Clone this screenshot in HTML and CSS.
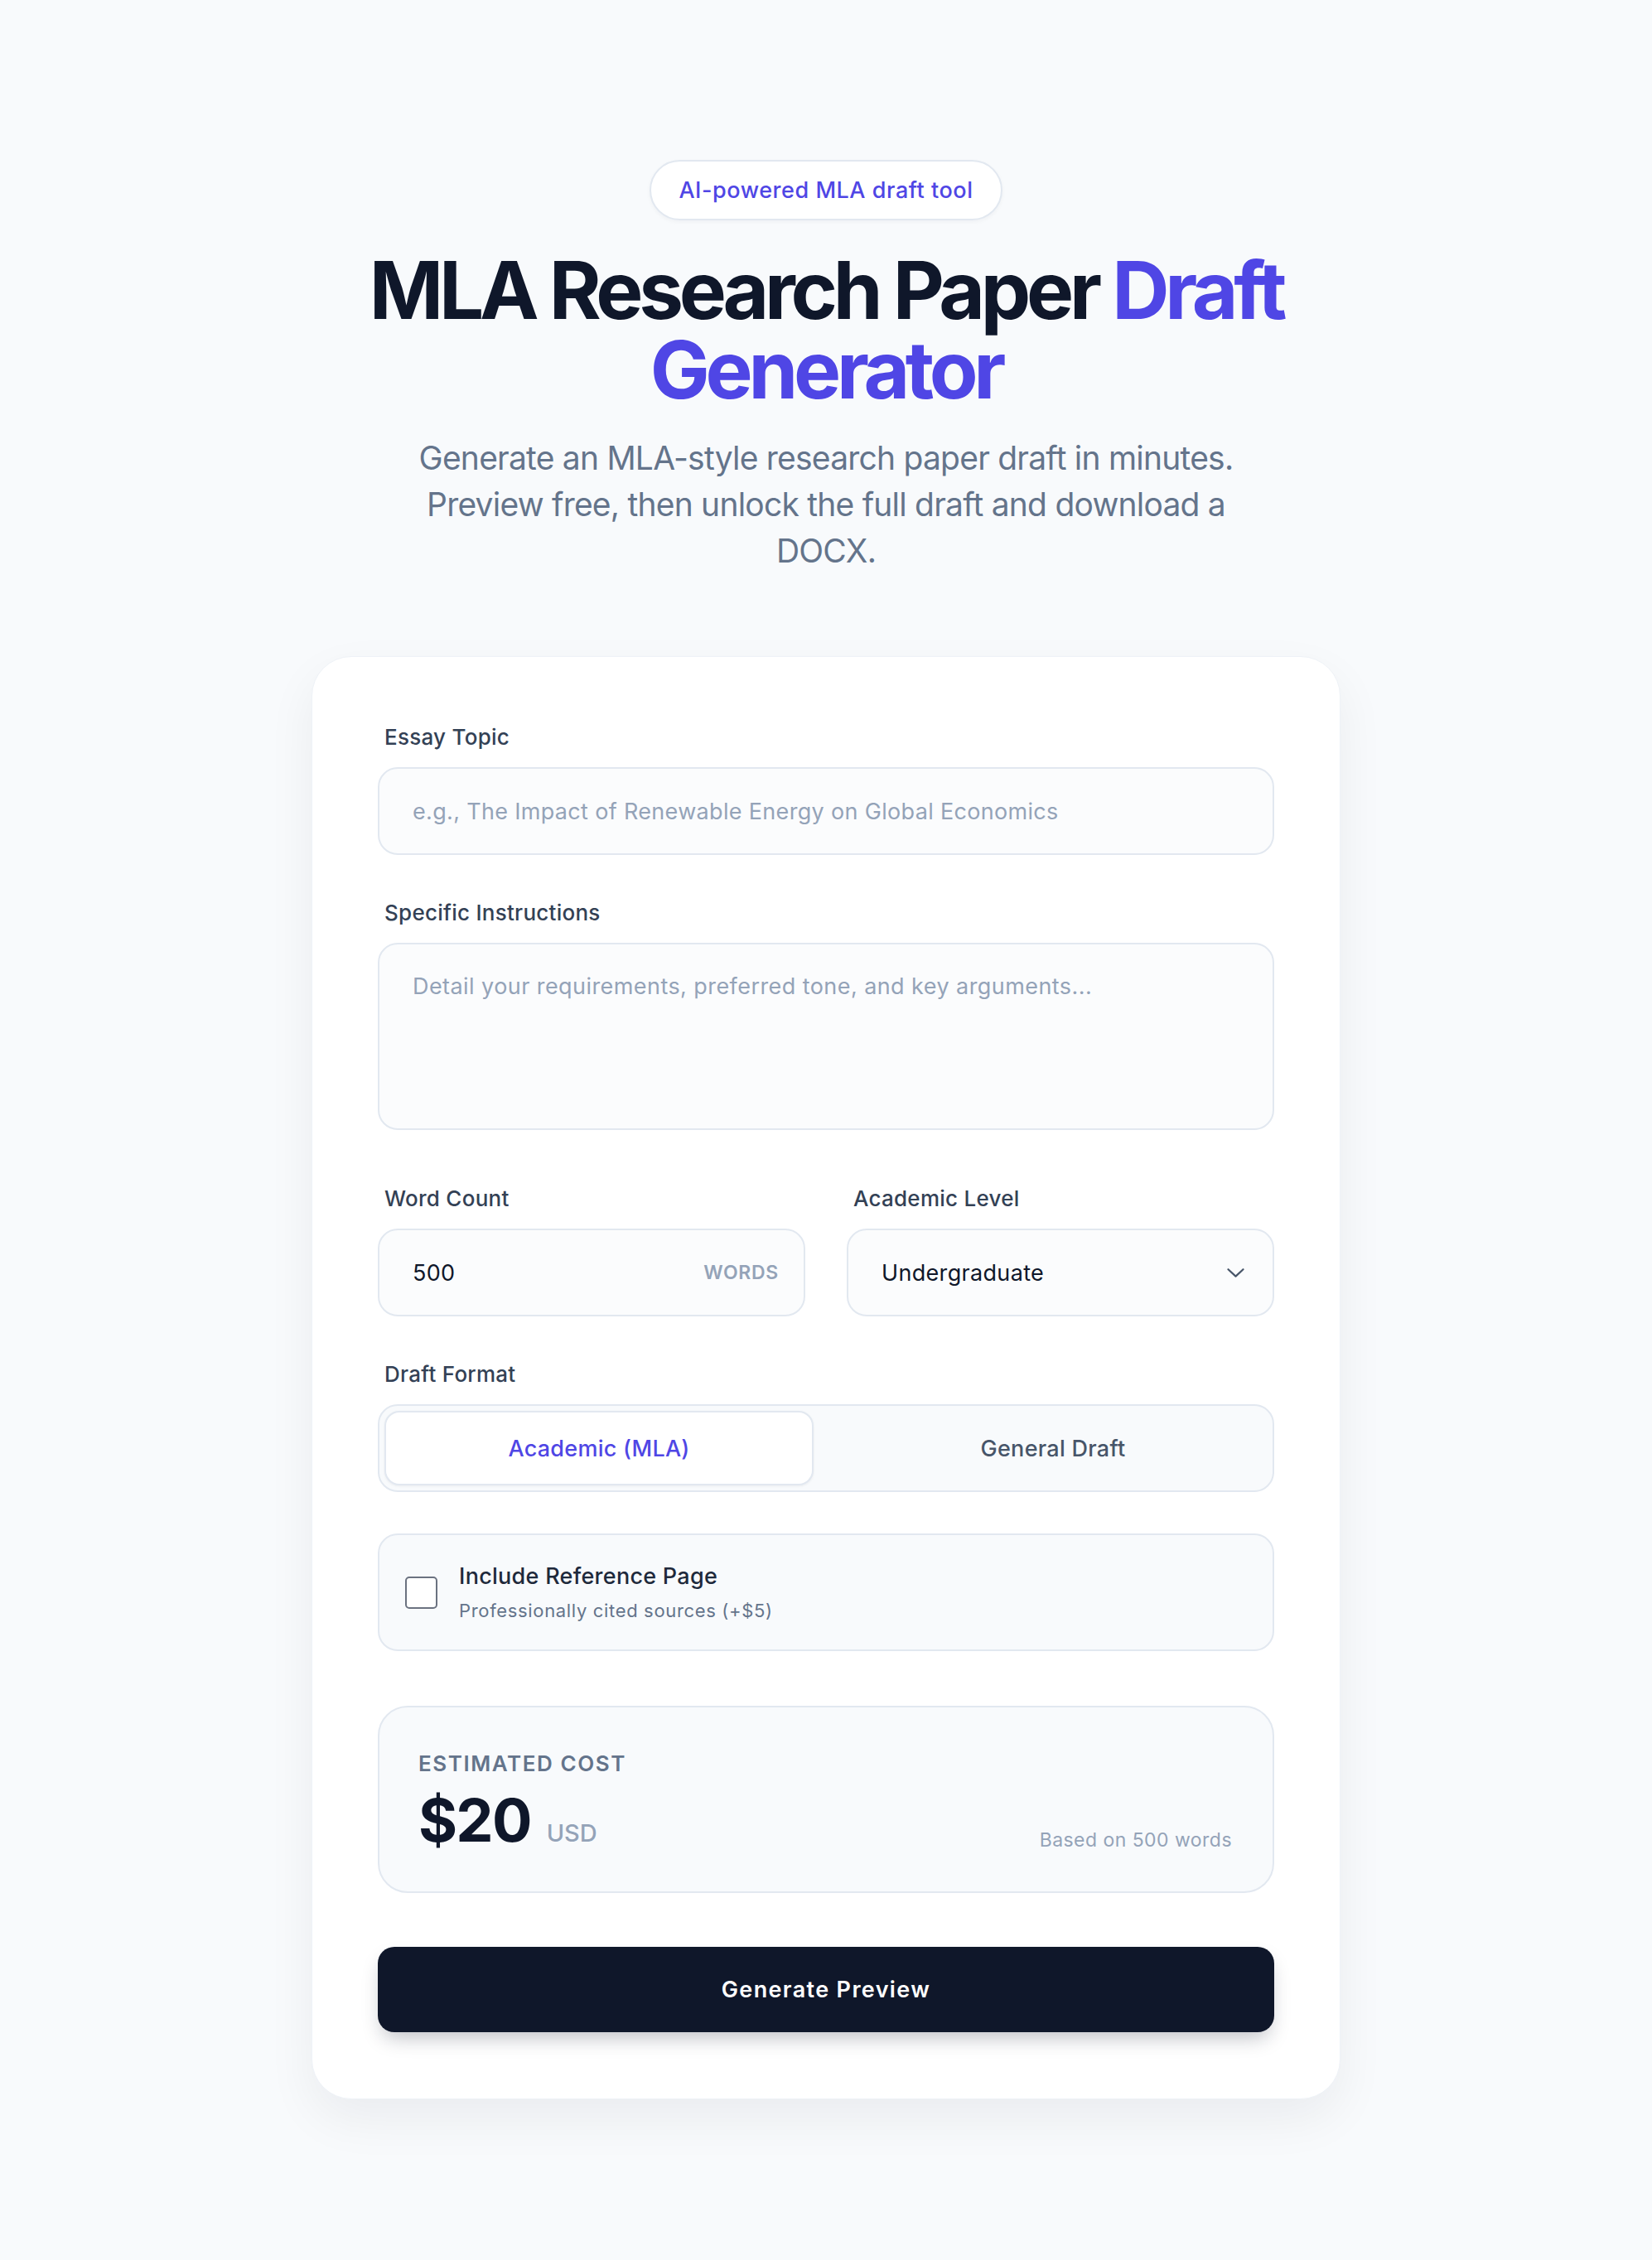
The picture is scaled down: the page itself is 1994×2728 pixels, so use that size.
FILE: index.html
```html
<!DOCTYPE html>
<html lang="en">
<head>
<meta charset="utf-8">
<title>MLA Research Paper Draft Generator</title>
<link rel="stylesheet" href="styles.css">
</head>
<body>
<main class="page">
  <div class="badge">AI-powered MLA draft tool</div>
  <h1 class="title">MLA Research Paper <span class="accent">Draft Generator</span></h1>
  <p class="lead">Generate an MLA-style research paper draft in minutes. Preview free, then unlock the full draft and download a DOCX.</p>

  <form class="card">
    <div class="field">
      <label class="label" for="topic">Essay Topic</label>
      <input class="control" id="topic" type="text" placeholder="e.g., The Impact of Renewable Energy on Global Economics">
    </div>

    <div class="field gap-52">
      <label class="label" for="instructions">Specific Instructions</label>
      <textarea class="control area" id="instructions" placeholder="Detail your requirements, preferred tone, and key arguments..."></textarea>
    </div>

    <div class="row gap-65">
      <div class="field">
        <label class="label" for="words">Word Count</label>
        <div class="control box">
          <input class="bare" id="words" type="text" value="500">
          <span class="suffix">WORDS</span>
        </div>
      </div>
      <div class="field">
        <label class="label" for="level">Academic Level</label>
        <div class="control box select-box">
          <select class="bare" id="level">
            <option>Undergraduate</option>
            <option>High School</option>
            <option>Graduate</option>
          </select>
          <svg class="chevron" width="21" height="11" viewBox="0 0 21 11" aria-hidden="true">
            <path d="M1.5 1.2 L10.5 9.6 L19.5 1.2" fill="none" stroke="#475569" stroke-width="2.2" stroke-linecap="round" stroke-linejoin="round"/>
          </svg>
        </div>
      </div>
    </div>

    <div class="field gap-52">
      <span class="label">Draft Format</span>
      <div class="segmented">
        <button type="button" class="seg active">Academic (MLA)</button>
        <button type="button" class="seg">General Draft</button>
      </div>
    </div>

    <label class="option gap-50">
      <input type="checkbox" class="check">
      <span class="opt-text">
        <span class="opt-title">Include Reference Page</span>
        <span class="opt-sub">Professionally cited sources (+$5)</span>
      </span>
    </label>

    <div class="cost gap-66">
      <div class="cost-label">Estimated Cost</div>
      <div class="cost-row">
        <div class="price">
          <span class="amount">$20</span>
          <span class="currency">USD</span>
        </div>
        <span class="basis">Based on 500 words</span>
      </div>
    </div>

    <button type="button" class="submit gap-65">Generate Preview</button>
  </form>
</main>
</body>
</html>
```

FILE: styles.css
```css
* {
  box-sizing: border-box;
}

body {
  margin: 0;
  background: #f8fafc;
  font-family: Inter, "Noto Sans", "Liberation Sans", sans-serif;
  color: #0f172a;
}

.page {
  display: flex;
  flex-direction: column;
  align-items: center;
  padding: 193px 0 194px;
}

.badge {
  height: 73px;
  padding: 0 33px;
  display: inline-flex;
  align-items: center;
  border: 2px solid #e2e8f0;
  border-radius: 999px;
  background: #ffffff;
  color: #4f46e5;
  font-size: 27px;
  font-weight: 500;
  letter-spacing: 0.02em;
  box-shadow: 0 2px 5px rgba(15, 23, 42, 0.04);
}

.title {
  margin: 36px 0 0;
  max-width: 1242px;
  font-size: 96px;
  line-height: 96px;
  font-weight: 700;
  letter-spacing: -0.055em;
  color: #0f172a;
  text-align: center;
}

.accent {
  color: #4f46e5;
}

.lead {
  margin: 31px 0 0;
  max-width: 1020px;
  font-size: 39px;
  line-height: 56px;
  letter-spacing: -0.02em;
  color: #64748b;
  text-align: center;
}

.card {
  width: 1242px;
  margin-top: 99px;
  padding: 79px 79px 80px;
  background: #ffffff;
  border: 1px solid #eef2f7;
  border-radius: 48px;
  box-shadow: 0 24px 60px rgba(15, 23, 42, 0.06);
  display: flex;
  flex-direction: column;
}

.gap-50 { margin-top: 50px; }
.gap-52 { margin-top: 52px; }
.gap-65 { margin-top: 65px; }
.gap-66 { margin-top: 66px; }

.field {
  min-width: 0;
  display: flex;
  flex-direction: column;
}

.label {
  display: block;
  padding-left: 8px;
  margin-bottom: 18px;
  font-size: 26px;
  line-height: 36px;
  font-weight: 500;
  letter-spacing: 0.01em;
  color: #334155;
}

.control {
  width: 100%;
  height: 106px;
  padding: 0 40px;
  border: 2px solid #e2e8f0;
  border-radius: 24px;
  background: #fbfcfd;
  font-family: inherit;
  font-size: 27px;
  font-weight: 400;
  letter-spacing: 0.012em;
  color: #0f172a;
  outline: none;
}

.control::placeholder {
  color: #94a3b8;
  opacity: 1;
}

.area {
  display: block;
  height: 226px;
  padding: 31px 40px;
  line-height: 40px;
  letter-spacing: 0.016em;
  resize: none;
}

.row {
  display: grid;
  grid-template-columns: repeat(2, minmax(0, 1fr));
  column-gap: 50px;
}

.box {
  display: flex;
  align-items: center;
  padding: 0 30px 0 40px;
}

.bare {
  flex: 1;
  width: 0;
  min-width: 0;
  margin: 0;
  padding: 0;
  border: 0;
  background: transparent;
  font-family: inherit;
  font-size: 27px;
  font-weight: 400;
  letter-spacing: 0.012em;
  color: #0f172a;
  outline: none;
  appearance: none;
  -webkit-appearance: none;
}

.suffix {
  font-size: 23px;
  font-weight: 600;
  letter-spacing: 0.03em;
  color: #94a3b8;
}

.select-box {
  padding-right: 34px;
}

.chevron {
  flex: none;
  display: block;
}

.segmented {
  height: 106px;
  padding: 6px;
  display: grid;
  grid-template-columns: repeat(2, minmax(0, 1fr));
  column-gap: 30px;
  border: 2px solid #e2e8f0;
  border-radius: 24px;
  background: #f8fafc;
}

.seg {
  border: 2px solid transparent;
  border-radius: 18px;
  background: transparent;
  font-family: inherit;
  font-size: 27px;
  font-weight: 500;
  letter-spacing: 0.01em;
  color: #475569;
  cursor: pointer;
}

.seg.active {
  background: #ffffff;
  border-color: #e2e8f0;
  color: #4f46e5;
  box-shadow: 0 1px 3px rgba(15, 23, 42, 0.06);
}

.option {
  height: 142px;
  padding: 0 31px;
  display: flex;
  align-items: center;
  gap: 26px;
  border: 2px solid #e2e8f0;
  border-radius: 24px;
  background: #f8fafc;
  cursor: pointer;
}

.check {
  flex: none;
  width: 39px;
  height: 39px;
  margin: 0;
  border: 2px solid #6b7280;
  border-radius: 5px;
  background: #ffffff;
  appearance: none;
  -webkit-appearance: none;
}

.opt-text {
  display: flex;
  flex-direction: column;
  gap: 8px;
}

.opt-title {
  font-size: 27px;
  line-height: 36px;
  font-weight: 500;
  letter-spacing: 0.01em;
  color: #1e293b;
}

.opt-sub {
  font-size: 22px;
  line-height: 30px;
  color: #64748b;
  letter-spacing: 0.03em;
}

.cost {
  height: 226px;
  padding: 50px 49px 50px 47px;
  display: flex;
  flex-direction: column;
  border: 2px solid #e2e8f0;
  border-radius: 36px;
  background: #f8fafc;
}

.cost-label {
  font-size: 26px;
  line-height: 36px;
  font-weight: 600;
  letter-spacing: 0.06em;
  text-transform: uppercase;
  color: #64748b;
}

.cost-row {
  margin-top: 14px;
  display: flex;
  justify-content: space-between;
  align-items: flex-end;
}

.price {
  display: flex;
  align-items: baseline;
  gap: 19px;
}

.amount {
  font-size: 72px;
  line-height: 72px;
  font-weight: 700;
  letter-spacing: -0.025em;
  color: #0f172a;
}

.currency {
  font-size: 29px;
  font-weight: 500;
  color: #94a3b8;
}

.basis {
  font-size: 23px;
  line-height: 24px;
  letter-spacing: 0.02em;
  color: #94a3b8;
}

.submit {
  height: 103px;
  border: 0;
  border-radius: 20px;
  background: #0f172a;
  color: #ffffff;
  font-family: inherit;
  font-size: 27px;
  font-weight: 600;
  letter-spacing: 0.05em;
  box-shadow: 0 12px 24px -6px rgba(15, 23, 42, 0.28);
  cursor: pointer;
}
```
